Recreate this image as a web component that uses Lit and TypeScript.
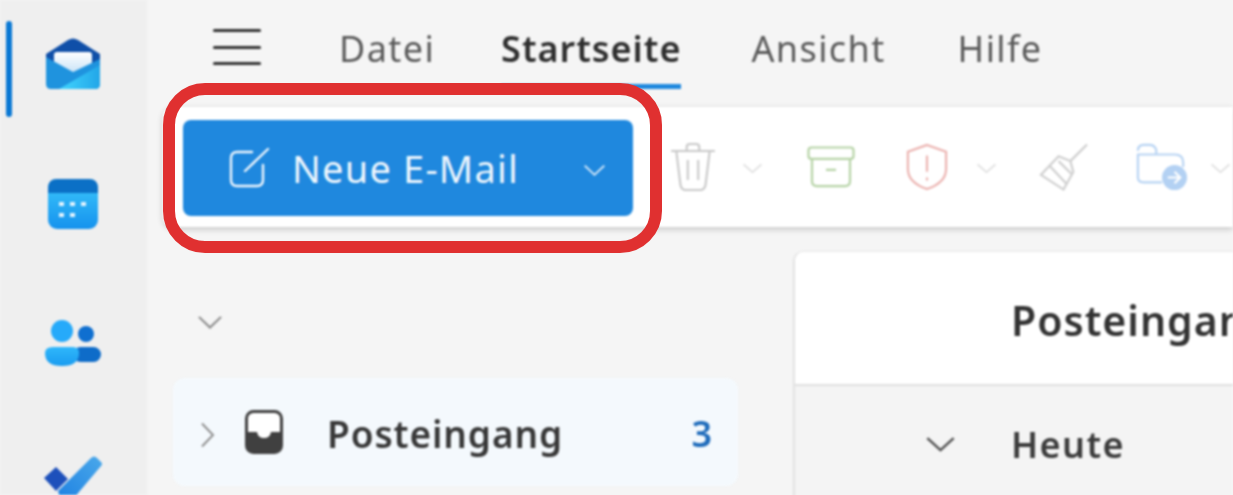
import { LitElement, html, css } from "lit";
import { customElement } from "lit/decorators.js";

const chev = (cls: string) => html`<svg class=${cls} viewBox="0 0 20 12" preserveAspectRatio="none" fill="none"><path d="M1.500 1.500 10 10l8.500-8.500" stroke="currentColor" stroke-width="1.600"/></svg>`;

@customElement("app-root")
export class AppRoot extends LitElement {
  static styles = css`
    :host { display: block; width: 1233px; height: 495px; overflow: hidden; background: #f5f5f5; font-family: "Noto Sans", "Open Sans", sans-serif; position: relative; color: #424242; }
    .app { display: grid; grid-template-columns: 147px 1fr; height: 495px; filter: blur(0.85px); }
    .rail { background: #efefef; position: relative; display: flex; flex-direction: column; align-items: center; padding: 38px 2px 0 0; height: 495px; box-sizing: border-box; overflow: hidden; }
    .indicator { position: absolute; left: 6px; top: 21px; width: 6px; height: 96px; background: #0a78d4; border-radius: 3px; }
    .rail svg { display: block; flex: none; }
    .cal { margin-top: 89px; }
    .ppl { margin-top: 91px; }
    .chk { margin-top: 87px; }
    .main { min-width: 0; display: flex; flex-direction: column; }
    .tabs { height: 107px; flex: none; display: flex; align-items: flex-start; padding-left: 66px; box-sizing: border-box; }
    .burger { width: 48px; height: 36px; margin-top: 29px; display: flex; flex-direction: column; justify-content: space-between; }
    .burger i { display: block; height: 3px; background: #333; border-radius: 2px; }
    .tab { font-size: 36px; letter-spacing: 1.400px; line-height: 46px; margin-top: 26px; color: #5a5a5a; position: relative; white-space: nowrap; }
    .t1 { margin-left: 78px; }
    .t2 { margin-left: 66px; color: #2e2e2e; font-weight: 600; letter-spacing: 1px; }
    .t3 { margin-left: 70px; }
    .t4 { margin-left: 72px; }
    .t2::after { content: ""; position: absolute; left: 0; right: 0; top: 58px; height: 5px; background: #1f88de; }
    .toolbar { height: 120px; flex: none; margin-left: 16px; background: #fff; box-shadow: 0 2px 6px rgba(0,0,0,.2); border-radius: 10px 0 0 10px; display: flex; align-items: center; padding-left: 20px; box-sizing: border-box; }
    .newmail { width: 450px; height: 96px; margin-top: 1px; background: #1f88de; border-radius: 8px; color: #eef6fd; display: flex; align-items: center; padding-left: 45px; box-sizing: border-box; font-size: 38px; letter-spacing: 1.200px; flex: none; }
    .newmail .label { margin-left: 22px; white-space: nowrap; }
    .newmail .dd { width: 23px; height: 13px; margin-left: auto; margin-right: 27px; margin-top: 6px; color: #dcecfa; }
    .tb { display: flex; align-items: center; flex: none; }
    .tb .dd { width: 21px; height: 11px; color: #dedede; margin-top: 3px; }
    .trash { margin-left: 36px; }
    .gap25 { width: 25px; }
    .gap28 { width: 28px; }
    .gap22 { width: 22px; }
    .arch { margin-left: 44px; }
    .shld { margin-left: 51px; }
    .brm { margin-left: 42px; }
    .fld { margin-left: 48px; }
    .body { flex: 1; display: flex; min-height: 0; margin-top: 24px; }
    .side { width: 648px; flex: none; padding: 64px 0 0 26px; box-sizing: border-box; }
    .side > .dn { display: block; width: 26px; height: 15px; margin-left: 24px; color: #8a8a8a; }
    .row { margin-top: 48px; width: 565px; height: 108px; background: #f4f9fd; border-radius: 12px; display: flex; align-items: center; box-sizing: border-box; padding-left: 27px; }
    .row .rt { width: 15px; height: 26px; color: #909090; flex: none; margin-top: 5px; }
    .row .inbox { margin-left: 30px; flex: none; }
    .row .name { margin-left: 44px; font-size: 37px; letter-spacing: 0.900px; font-weight: 600; color: #383838; margin-top: 2px; }
    .row .count { margin-left: auto; margin-right: 26px; font-size: 36px; font-weight: 600; color: #1f6cbb; margin-top: 2px; }
    .panel { flex: 1; min-width: 0; background: #f4f4f4; border-left: 2px solid #e2e2e2; border-top: 1px solid #e8e8e8; border-top-left-radius: 10px; overflow: hidden; margin-left: -2px; }
    .phead { height: 132px; background: #fff; border-bottom: 2px solid #e0e0e0; padding-left: 216px; font-size: 41px; letter-spacing: 1px; font-weight: 600; line-height: 136px; color: #333; white-space: nowrap; overflow: hidden; }
    .group { display: flex; align-items: center; height: 116px; padding-left: 130px; font-size: 36px; letter-spacing: 1.400px; font-weight: 600; color: #3c3c3c; }
    .group svg { width: 31px; height: 17px; color: #555; }
    .group span { margin-left: 55px; }
    .mark { position: absolute; left: 163px; top: 83px; width: 475px; height: 146px; border: 12px solid #e03030; border-radius: 42px; filter: blur(.6px); }
  `;

  render() {
    return html`<div class="app">
      <nav class="rail">
        <div class="indicator"></div>
        <svg width="56" height="52" viewBox="0 0 56 52">
          <defs>
            <linearGradient id="mw" x1="0" y1="0" x2="0" y2="1"><stop offset="0" stop-color="#fff"/><stop offset="1" stop-color="#bcdcf5"/></linearGradient>
            <linearGradient id="ml" x1="0" y1="0" x2="1" y2="0"><stop offset="0" stop-color="#42d6ff"/><stop offset="1" stop-color="#22a6e8"/></linearGradient>
          </defs>
          <path d="M1 16 23 2q5-3 10 0l22 14v12H1z" fill="#0f4fa8"/>
          <rect x="9" y="14" width="38" height="26" rx="3" fill="url(#mw)"/>
          <path d="M1 19 28 34 55 21v25q0 5-5 5H6q-5 0-5-5z" fill="#1f93de"/>
          <path d="M14 51 55 27v19q0 5-5 5z" fill="url(#ml)"/>
        </svg>
        <svg class="cal" width="50" height="50" viewBox="0 0 50 50">
          <defs><linearGradient id="cb" x1="0" y1="0" x2="0" y2="1"><stop offset="0" stop-color="#3cc8fc"/><stop offset="1" stop-color="#1592ee"/></linearGradient></defs>
          <rect width="50" height="50" rx="9" fill="url(#cb)"/>
          <path d="M0 14V9q0-9 9-9h32q9 0 9 9v5z" fill="#0b70c6"/>
          <g fill="#e4f4fe"><rect x="11" y="23" width="5" height="4"/><rect x="22" y="23" width="5" height="4"/><rect x="33" y="23" width="5" height="4"/><rect x="11" y="34" width="5" height="4"/><rect x="22" y="34" width="5" height="4"/></g>
        </svg>
        <svg class="ppl" width="56" height="48" viewBox="0 0 56 48">
          <defs><linearGradient id="pb" x1="0" y1="0" x2="0" y2="1"><stop offset="0" stop-color="#2fb7fb"/><stop offset="1" stop-color="#1a9cf0"/></linearGradient></defs>
          <circle cx="41" cy="14" r="8" fill="#0f6fd0"/>
          <rect x="28" y="27" width="28" height="15" rx="7.500" fill="#0e6cc9"/>
          <circle cx="17" cy="11" r="11" fill="#26aafa"/>
          <path d="M8 27h20q6 0 6 6 0 13-17 13T0 33q0-6 8-6z" fill="url(#pb)"/>
        </svg>
        <svg class="chk" width="58" height="50" viewBox="0 0 58 50">
          <defs><linearGradient id="tk" x1="0" y1="1" x2="1" y2="0"><stop offset="0" stop-color="#1b7fe2"/><stop offset="1" stop-color="#4aa8ea"/></linearGradient></defs>
          <path d="M0 23 12 12 24 24 12 36z" fill="#1d50bb"/>
          <path d="M14 36 47 3q3-3 6 0l4 4q2 2 0 4L24 50q-3 3-6 0z" fill="url(#tk)"/>
        </svg>
      </nav>
      <div class="main">
        <div class="tabs">
          <div class="burger"><i></i><i></i><i></i></div>
          <div class="tab t1">Datei</div>
          <div class="tab t2">Startseite</div>
          <div class="tab t3">Ansicht</div>
          <div class="tab t4">Hilfe</div>
        </div>
        <div class="toolbar">
          <div class="newmail">
            <svg width="42" height="42" viewBox="0 0 42 42" fill="none" stroke="#eef6fd" stroke-width="2.400" stroke-linecap="round"><path d="M24 5H9q-6 0-6 6v22q0 6 6 6h20q6 0 6-6V18"/><path d="M17 24 40 2"/></svg>
            <span class="label">Neue E-Mail</span>
            ${chev("dd")}
          </div>
          <div class="tb trash">
            <svg width="48" height="50" viewBox="0 0 46 50" preserveAspectRatio="none" fill="none" stroke="#c8c8c8" stroke-width="2"><path d="M2 9h42M17 9V5q0-3 3-3h6q3 0 3 3v4M7 9l4 34q1 5 5 5h14q4 0 5-5l4-34M18 18v20M28 18v20"/></svg>
            <span class="gap25"></span>${chev("dd")}
          </div>
          <svg class="arch" width="48" height="42" viewBox="0 0 48 44" preserveAspectRatio="none" fill="none" stroke="#b6d3a6" stroke-width="2.200"><rect x="1.500" y="1.500" width="45" height="12" rx="3"/><path d="M5 14v23q0 5 5 5h28q5 0 5-5V14M19 25h10"/></svg>
          <div class="tb shld">
            <svg width="42" height="48" viewBox="0 0 44 50" preserveAspectRatio="none" fill="none" stroke="#ebb1ae" stroke-width="2.200"><path d="M22 2 42 9v18q0 14-20 21Q2 41 2 27V9zM22 13v17M22 36v3"/></svg>
            <span class="gap28"></span>${chev("dd")}
          </div>
          <svg class="brm" width="49" height="50" viewBox="0 0 50 50" fill="none" stroke="#cfcfcf" stroke-width="2.200"><path d="M49 2 32 19M2 33 20 14l12 5 3 11-10 18zM11 24l17 18M20 19l13 13"/></svg>
          <div class="tb fld">
            <svg width="52" height="48" viewBox="0 0 54 50" preserveAspectRatio="none" fill="none" stroke="#b7d3f3" stroke-width="2.200"><path d="M2 8q0-6 6-6h6q5 0 7 5v5h19q9 0 9 8v5M21 12H2v24q0 5 6 5h19"/><circle cx="40" cy="36" r="13" fill="#b3d1f3" stroke="none"/><path d="M33 36h13M40 30l6 6-6 6" stroke="#fff"/></svg>
            <span class="gap22"></span>${chev("dd")}
          </div>
        </div>
        <div class="body">
          <div class="side">
            ${chev("dn")}
            <div class="row">
              <svg class="rt" viewBox="0 0 14 26" fill="none"><path d="M1.500 1.500 12.500 13 1.500 24.500" stroke="currentColor" stroke-width="2"/></svg>
              <svg class="inbox" width="38" height="44" viewBox="0 0 38 44"><rect x="1.500" y="1.500" width="35" height="41" rx="7" fill="#fff" stroke="#404040" stroke-width="3"/><path d="M1.500 22H12q1 6 7 6t7-6h10.500v13.500q0 7-7 7h-21q-7 0-7-7z" fill="#404040"/></svg>
              <span class="name">Posteingang</span>
              <span class="count">3</span>
            </div>
          </div>
          <section class="panel">
            <div class="phead">Posteingang</div>
            <div class="group">${chev("")}<span>Heute</span></div>
          </section>
        </div>
      </div>
      </div>
      <div class="mark"></div>`;
  }
}
